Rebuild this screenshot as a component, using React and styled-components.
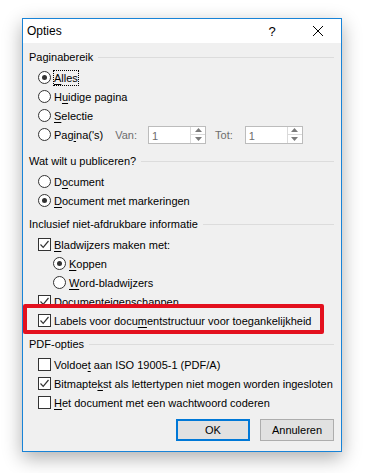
import React from 'react'
import styled, { createGlobalStyle } from 'styled-components'

const Global = createGlobalStyle`
  body {
    margin: 0;
    background: #ffffff;
    font-family: "Liberation Sans", Arial, sans-serif;
  }
`

const Page = styled.div`
  padding: 18px 0 0 22px;
  width: 367px;
  height: 473px;
  box-sizing: border-box;
`

const Window = styled.div`
  width: 320px;
  height: 434px;
  box-sizing: border-box;
  border: 1px solid #1883d7;
  background: #f0f0f0;
  box-shadow: 0 6px 18px rgba(0, 0, 0, 0.32);
  display: flex;
  flex-direction: column;
  font-size: 11px;
  color: #000;
`

const TitleBar = styled.div`
  height: 24px;
  background: #fff;
  display: flex;
  align-items: center;
  padding-left: 4px;
`

const Title = styled.div`
  flex: 1;
  font-size: 12px;
`

const TitleButton = styled.div`
  width: ${p => p.w}px;
  display: flex;
  justify-content: center;
  align-items: center;
  font-size: 13px;
`

const Body = styled.div`
  padding: 4px 7px 0 6px;
  display: flex;
  flex-direction: column;
`

const Group = styled.div`
  display: flex;
  flex-direction: column;
  margin-bottom: ${p => p.mb ?? 4}px;
`

const Header = styled.div`
  height: 20px;
  display: flex;
  align-items: center;
  margin-bottom: 1px;
  &::after {
    content: "";
    flex: 1;
    height: 1px;
    background: #dcdcdc;
    margin-left: 5px;
  }
`

const Row = styled.div`
  position: relative;
  height: 19px;
  display: flex;
  align-items: center;
  padding-left: ${p => (p.indent ? 24 : 9)}px;
  margin-bottom: ${p => p.mb || 0}px;
`

const Radio = styled.span`
  width: 13px;
  height: 13px;
  box-sizing: border-box;
  border: 1px solid #333;
  border-radius: 50%;
  background: #fff;
  display: flex;
  align-items: center;
  justify-content: center;
  margin-right: 3px;
  &::after {
    content: "";
    width: 5px;
    height: 5px;
    border-radius: 50%;
    background: ${p => (p.on ? '#333' : 'transparent')};
  }
`

const Box = styled.span`
  width: 13px;
  height: 13px;
  box-sizing: border-box;
  border: 1px solid #333;
  background: #fff;
  display: flex;
  align-items: center;
  justify-content: center;
  margin-right: 3px;
`

const Label = styled.span`
  outline: ${p => (p.focus ? '1px dotted #000' : 'none')};
  outline-offset: 0px;
  white-space: nowrap;
  line-height: 14px;
`

const Muted = styled.span`
  color: #6d6d6d;
  margin: 0 ${p => p.mr}px 0 ${p => p.ml}px;
`

const Spin = styled.div`
  width: 58px;
  height: 18px;
  box-sizing: border-box;
  border: 1px solid #bcbcbc;
  background: #fff;
  display: flex;
`

const SpinValue = styled.div`
  flex: 1;
  color: #6d6d6d;
  padding: 3px 0 0 3px;
`

const SpinArrows = styled.div`
  width: 14px;
  border-left: 1px solid #dadada;
  display: flex;
  flex-direction: column;
  & > div {
    flex: 1;
    display: flex;
    align-items: center;
    justify-content: center;
  }
  & > div + div {
    border-top: 1px solid #dadada;
  }
`

const Highlight = styled.div`
  position: absolute;
  left: -6px;
  top: -7px;
  width: 301px;
  height: 30px;
  box-sizing: border-box;
  border: 4px solid #e3101e;
  border-radius: 2px;
  pointer-events: none;
`

const Buttons = styled.div`
  display: flex;
  justify-content: flex-end;
  gap: 10px;
  margin-top: 7px;
`

const Button = styled.div`
  width: 74px;
  height: 22px;
  box-sizing: border-box;
  background: #e1e1e1;
  border: ${p => (p.primary ? '2px solid #0078d7' : '1px solid #adadad')};
  display: flex;
  align-items: center;
  justify-content: center;
`

const U = styled.u`
  text-decoration-thickness: 1px;
  text-underline-offset: 2px;
`

const Check = () => (
  <svg width="11" height="11" viewBox="0 0 11 11">
    <path d="M1.5 5.5 L4.2 8.3 L9.5 2" stroke="#333" strokeWidth="1.2" fill="none" />
  </svg>
)

const CheckBox = ({ on }) => <Box>{on && <Check />}</Box>

const SpinBox = () => (
  <Spin>
    <SpinValue>1</SpinValue>
    <SpinArrows>
      <div>
        <svg width="7" height="4" viewBox="0 0 7 4"><path d="M0 4 L3.5 0 L7 4Z" fill="#7a7a7a" /></svg>
      </div>
      <div>
        <svg width="7" height="4" viewBox="0 0 7 4"><path d="M0 0 L3.5 4 L7 0Z" fill="#7a7a7a" /></svg>
      </div>
    </SpinArrows>
  </Spin>
)

export default function App() {
  return (
    <Page>
      <Global />
      <Window>
        <TitleBar>
          <Title>Opties</Title>
          <TitleButton w={46}>?</TitleButton>
          <TitleButton w={46}>
            <svg width="10" height="10" viewBox="0 0 10 10">
              <path d="M0 0 L10 10 M10 0 L0 10" stroke="#000" strokeWidth="1" />
            </svg>
          </TitleButton>
        </TitleBar>
        <Body>
          <Group>
            <Header>Paginabereik</Header>
            <Row><Radio on /><Label focus><U>A</U>lles</Label></Row>
            <Row><Radio /><Label>H<U>u</U>idige pagina</Label></Row>
            <Row><Radio /><Label><U>S</U>electie</Label></Row>
            <Row mb={3}>
              <Radio /><Label>Pag<U>i</U>na('s)</Label>
              <Muted ml={12} mr={11}>Van:</Muted>
              <SpinBox />
              <Muted ml={9} mr={12}>Tot:</Muted>
              <SpinBox />
            </Row>
          </Group>
          <Group>
            <Header>Wat wilt u publiceren?</Header>
            <Row><Radio /><Label>D<U>o</U>cument</Label></Row>
            <Row><Radio on /><Label><U>D</U>ocument met markeringen</Label></Row>
          </Group>
          <Group>
            <Header>Inclusief niet-afdrukbare informatie</Header>
            <Row><CheckBox on /><Label><U>B</U>ladwijzers maken met:</Label></Row>
            <Row indent><Radio on /><Label><U>K</U>oppen</Label></Row>
            <Row indent><Radio /><Label><U>W</U>ord-bladwijzers</Label></Row>
            <Row><CheckBox on /><Label>Documenteigenschappen</Label></Row>
            <Row>
              <CheckBox on />
              <Label>Labels voor docu<U>m</U>entstructuur voor toegankelijkheid</Label>
              <Highlight />
            </Row>
          </Group>
          <Group mb={0}>
            <Header>PDF-opties</Header>
            <Row><CheckBox /><Label>Voldoe<U>t</U> aan ISO 19005-1 (PDF/A)</Label></Row>
            <Row><CheckBox on /><Label>Bitmapte<U>k</U>st als lettertypen niet mogen worden ingesloten</Label></Row>
            <Row><CheckBox /><Label><U>H</U>et document met een wachtwoord coderen</Label></Row>
          </Group>
          <Buttons>
            <Button primary>OK</Button>
            <Button>Annuleren</Button>
          </Buttons>
        </Body>
      </Window>
    </Page>
  )
}
